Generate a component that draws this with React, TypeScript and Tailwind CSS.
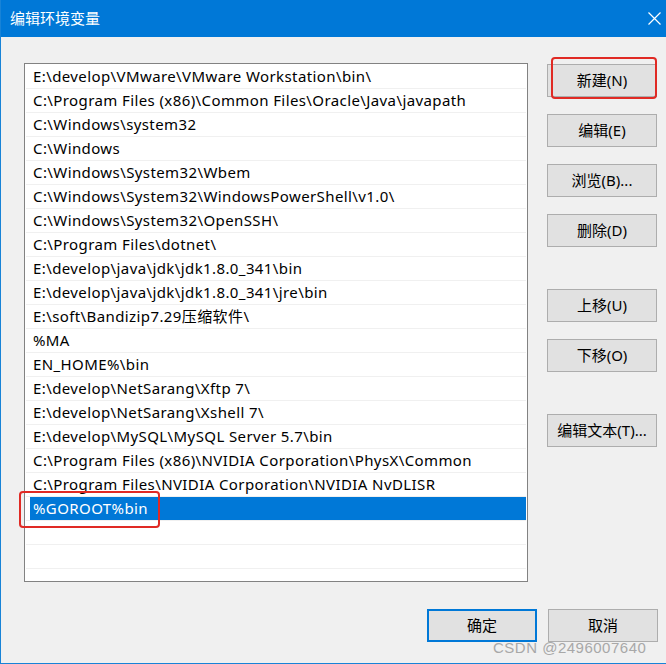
const paths = [
  "E:\\develop\\VMware\\VMware Workstation\\bin\\",
  "C:\\Program Files (x86)\\Common Files\\Oracle\\Java\\javapath",
  "C:\\Windows\\system32",
  "C:\\Windows",
  "C:\\Windows\\System32\\Wbem",
  "C:\\Windows\\System32\\WindowsPowerShell\\v1.0\\",
  "C:\\Windows\\System32\\OpenSSH\\",
  "C:\\Program Files\\dotnet\\",
  "E:\\develop\\java\\jdk\\jdk1.8.0_341\\bin",
  "E:\\develop\\java\\jdk\\jdk1.8.0_341\\jre\\bin",
  "E:\\soft\\Bandizip7.29压缩软件\\",
  "%MA",
  "EN_HOME%\\bin",
  "E:\\develop\\NetSarang\\Xftp 7\\",
  "E:\\develop\\NetSarang\\Xshell 7\\",
  "E:\\develop\\MySQL\\MySQL Server 5.7\\bin",
  "C:\\Program Files (x86)\\NVIDIA Corporation\\PhysX\\Common",
  "C:\\Program Files\\NVIDIA Corporation\\NVIDIA NvDLISR",
];

function Btn({ label, className = "" }: { label: string; className?: string }) {
  return (
    <button className={`h-[33px] w-[110px] bg-[#e1e1e1] border border-[#adadad] text-[15px] text-black flex items-center justify-center ${className}`}>
      {label}
    </button>
  );
}

function Row({ text }: { text: string }) {
  return (
    <div className="h-[24px] border-b border-[#f0f0f0] pl-[7px] flex items-center whitespace-nowrap">
      {text}
    </div>
  );
}

export default function App() {
  return (
    <div className="w-[666px] h-[664px] bg-[#f0f0f0] border-l border-b border-[#1883d7] flex flex-col relative font-['Noto_Sans','Noto_Sans_CJK_SC',sans-serif] text-black">
      {/* title bar */}
      <div className="h-[37px] bg-[#0078d7] flex items-center justify-between pl-[9px] pr-[5px] text-white text-[15px]">
        <span>编辑环境变量</span>
        <svg width="13" height="13" viewBox="0 0 13 13">
          <path d="M0.5 0.5 L12.5 12.5 M12.5 0.5 L0.5 12.5" stroke="white" strokeWidth="1.2" />
        </svg>
      </div>

      <div className="flex pl-[23px] pt-[26px] gap-[19px]">
        {/* list */}
        <div className="w-[504px] h-[519px] border border-[#828282] bg-white p-[1px] overflow-hidden text-[15px] tracking-[0.4px]">
          {paths.map((p) => (
            <Row key={p} text={p} />
          ))}
          <div className="h-[24px] border-b border-[#f0f0f0] flex items-center pl-[4px]">
            <div className="h-[23px] flex-1 bg-[#0078d7] text-white flex items-center pl-[3px]">%GOROOT%bin</div>
          </div>
          <Row text="" />
          <Row text="" />
        </div>

        {/* buttons */}
        <div className="flex flex-col pt-[1px]">
          <Btn label="新建(N)" />
          <Btn label="编辑(E)" className="mt-[17px]" />
          <Btn label="浏览(B)..." className="mt-[17px]" />
          <Btn label="删除(D)" className="mt-[17px]" />
          <Btn label="上移(U)" className="mt-[42px]" />
          <Btn label="下移(O)" className="mt-[17px]" />
          <Btn label="编辑文本(T)..." className="mt-[42px]" />
        </div>
      </div>

      {/* bottom buttons */}
      <div className="flex justify-end gap-[11px] pr-[8px] mt-[27px]">
        <button className="h-[33px] w-[110px] bg-[#e1e1e1] border-2 border-[#0078d7] text-[15px] flex items-center justify-center">确定</button>
        <Btn label="取消" />
      </div>

      {/* watermark */}
      <div className="absolute left-[492px] top-[639px] text-[15px] leading-[18px] text-[#a8a8a8] font-['Liberation_Sans',sans-serif] tracking-[0.5px]">
        CSDN @2496007640
      </div>

      {/* annotation boxes */}
      <div className="absolute left-[550px] top-[57px] w-[106px] h-[42px] border-2 border-[#e02a24] rounded-[4px] pointer-events-none" />
      <div className="absolute left-[18px] top-[491px] w-[141px] h-[37px] border-2 border-[#e02a24] rounded-[4px] pointer-events-none" />
    </div>
  );
}
